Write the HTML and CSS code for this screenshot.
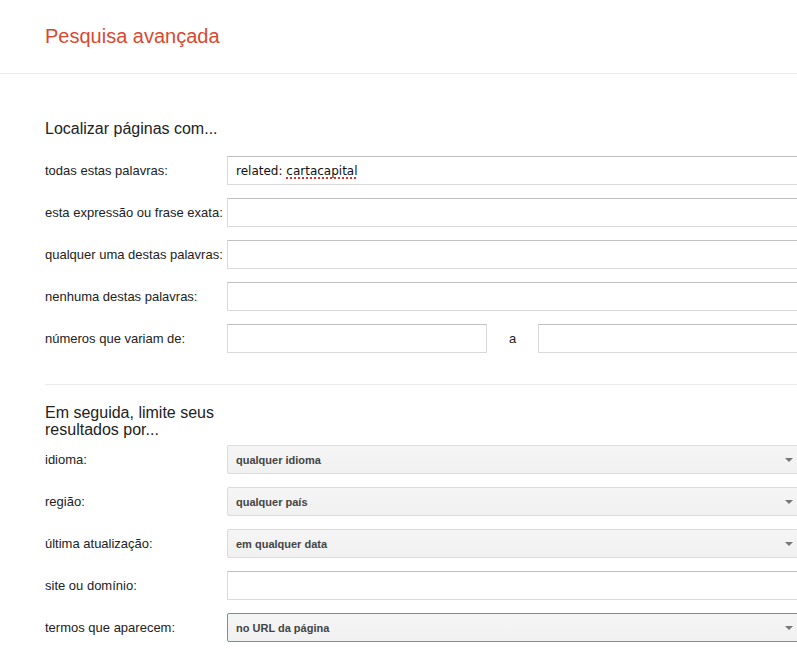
FILE: index.html
```html
<!DOCTYPE html>
<html lang="pt">
<head>
<meta charset="utf-8">
<title>Pesquisa avançada</title>
<link rel="stylesheet" href="styles.css">
</head>
<body>
<header class="topbar">
  <h1 class="title">Pesquisa avançada</h1>
</header>
<main class="main">
  <section class="section first">
    <h2 class="heading">Localizar páginas com...</h2>
    <div class="row">
      <label class="label">todas estas palavras:</label>
      <div class="field"><span class="value">related: <span class="misspelled">cartacapital</span></span></div>
    </div>
    <div class="row">
      <label class="label">esta expressão ou frase exata:</label>
      <div class="field"></div>
    </div>
    <div class="row">
      <label class="label">qualquer uma destas palavras:</label>
      <div class="field"></div>
    </div>
    <div class="row">
      <label class="label">nenhuma destas palavras:</label>
      <div class="field"></div>
    </div>
    <div class="row">
      <label class="label">números que variam de:</label>
      <div class="field short"></div>
      <span class="sep">a</span>
      <div class="field short"></div>
    </div>
  </section>
  <section class="section second">
    <h2 class="heading narrow">Em seguida, limite seus resultados por...</h2>
    <div class="row">
      <label class="label">idioma:</label>
      <div class="select"><span class="opt">qualquer idioma</span><span class="arrow"></span></div>
    </div>
    <div class="row">
      <label class="label">região:</label>
      <div class="select"><span class="opt">qualquer país</span><span class="arrow"></span></div>
    </div>
    <div class="row">
      <label class="label">última atualização:</label>
      <div class="select"><span class="opt">em qualquer data</span><span class="arrow"></span></div>
    </div>
    <div class="row">
      <label class="label">site ou domínio:</label>
      <div class="field"></div>
    </div>
    <div class="row">
      <label class="label">termos que aparecem:</label>
      <div class="select focused"><span class="opt">no URL da página</span><span class="arrow"></span></div>
    </div>
  </section>
</main>
</body>
</html>
```

FILE: styles.css
```css
html, body {
  margin: 0;
  padding: 0;
  overflow: hidden;
  background: #fff;
}
body {
  font-family: "Liberation Sans", Arial, sans-serif;
  color: #222;
  width: 797px;
  height: 649px;
}
.topbar {
  height: 73px;
  border-bottom: 1px solid #ebebeb;
  box-sizing: content-box;
}
.title {
  margin: 0;
  padding: 24px 0 0 45px;
  font-size: 20px;
  line-height: 24px;
  font-weight: normal;
  color: #d9492f;
}
.main {
  padding-left: 45px;
}
.section.first {
  padding-top: 45px;
  padding-bottom: 18px;
}
.section.second {
  border-top: 1px solid #ebebeb;
  padding-top: 19px;
}
.heading {
  margin: 0 0 17px 0;
  font-size: 16px;
  line-height: 20px;
  font-weight: normal;
  color: #222;
}
.heading.narrow {
  width: 182px;
  line-height: 17px;
  margin-bottom: 7px;
}
.row {
  display: flex;
  align-items: center;
  height: 29px;
  margin-bottom: 13px;
  white-space: nowrap;
}
.label {
  width: 182px;
  flex: none;
  font-size: 13px;
  color: #222;
}
.field {
  flex: none;
  box-sizing: border-box;
  width: 574px;
  height: 29px;
  border: 1px solid #d9d9d9;
  border-top-color: #c0c0c0;
  background: #fff;
  display: flex;
  align-items: center;
  padding-left: 8px;
}
.field.short {
  width: 260px;
}
.value {
  font-family: "DejaVu Sans", Verdana, sans-serif;
  font-size: 12px;
  color: #111;
}
.misspelled {
  text-decoration: underline dotted #e0302a;
  text-underline-offset: 3px;
  text-decoration-thickness: 2px;
}
.sep {
  width: 51px;
  flex: none;
  text-align: center;
  font-size: 13px;
  color: #222;
}
.select {
  flex: none;
  box-sizing: border-box;
  width: 574px;
  height: 29px;
  border: 1px solid #dcdcdc;
  border-radius: 2px;
  background: linear-gradient(#f5f5f5, #f1f1f1);
  display: flex;
  align-items: center;
  justify-content: space-between;
  padding: 0 7px 0 8px;
}
.select.focused {
  border-color: #4d90fe;
}
.opt {
  font-size: 11px;
  font-weight: bold;
  color: #444;
}
.arrow {
  width: 0;
  height: 0;
  border-left: 4px solid transparent;
  border-right: 4px solid transparent;
  border-top: 4px solid #777;
}
```
